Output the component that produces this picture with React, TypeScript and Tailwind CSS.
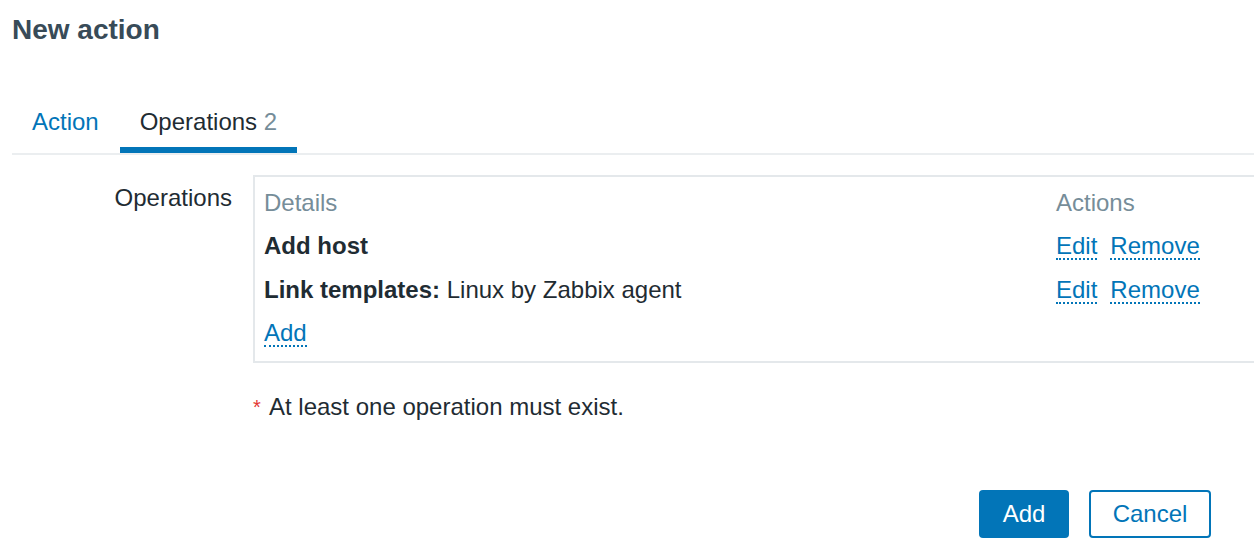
import React from "react";

const FONT = { fontFamily: '"Liberation Sans", Arial, sans-serif' };

function DottedLink({ children }: { children: React.ReactNode }) {
  return (
    <span className="cursor-pointer border-b-2 border-dotted border-[#0275b8] leading-[25px] text-[#0275b8]">
      {children}
    </span>
  );
}

const rows = [
  { bold: "Add host", rest: "" },
  { bold: "Link templates:", rest: " Linux by Zabbix agent" },
];

export default function App() {
  return (
    <div className="h-[552px] w-[1254px] overflow-hidden bg-white pl-[12px] text-[#1f2c33]" style={FONT}>
      <h1 className="pt-[14px] text-[28px] font-bold leading-[32px] text-[#384b58]">New action</h1>

      <div className="mt-[46px] flex border-b-2 border-[#ebeef0] text-[24px] leading-[24px]">
        <div className="cursor-pointer px-[20px] pb-[19px] pt-[18px] text-[#0275b8]">Action</div>
        <div className="ml-[1px] border-b-[6px] border-[#0275b8] px-[20px] pb-[13px] pt-[18px] text-[#1f2c33]">
          Operations <span className="text-[#768d99]">2</span>
        </div>
      </div>

      <div className="mt-[20px] flex gap-[21px] text-[24px] leading-[24px]">
        <div className="w-[220px] shrink-0 pt-[11px] text-right">Operations</div>
        <div className="w-[1010px] shrink-0">
          <div className="border-2 border-[#e4e8eb] px-[9px] pb-[6px] pt-[4px]">
            <div className="flex h-[43px] items-center text-[#768d99]">
              <div className="w-[792px]">Details</div>
              <div>Actions</div>
            </div>
            {rows.map((r) => (
              <div key={r.bold} className="flex h-[44px] items-center">
                <div className="w-[792px]">
                  <span className="font-bold">{r.bold}</span>
                  {r.rest}
                </div>
                <div className="flex gap-[13px]">
                  <DottedLink>Edit</DottedLink>
                  <DottedLink>Remove</DottedLink>
                </div>
              </div>
            ))}
            <div className="flex h-[43px] items-center">
              <DottedLink>Add</DottedLink>
            </div>
          </div>

          <div className="mt-[32px] flex items-center">
            <span className="w-[16px] text-[20px] text-[#e33734]">*</span>
            <span>At least one operation must exist.</span>
          </div>
        </div>
      </div>

      <div className="mt-[71px] flex justify-end gap-[20px] pr-[43px] text-[24px]">
        <button className="h-[48px] w-[90px] rounded-[4px] bg-[#0275b8] text-white">Add</button>
        <button className="h-[48px] w-[122px] rounded-[4px] border-2 border-[#0275b8] bg-white text-[#0275b8]">
          Cancel
        </button>
      </div>
    </div>
  );
}
